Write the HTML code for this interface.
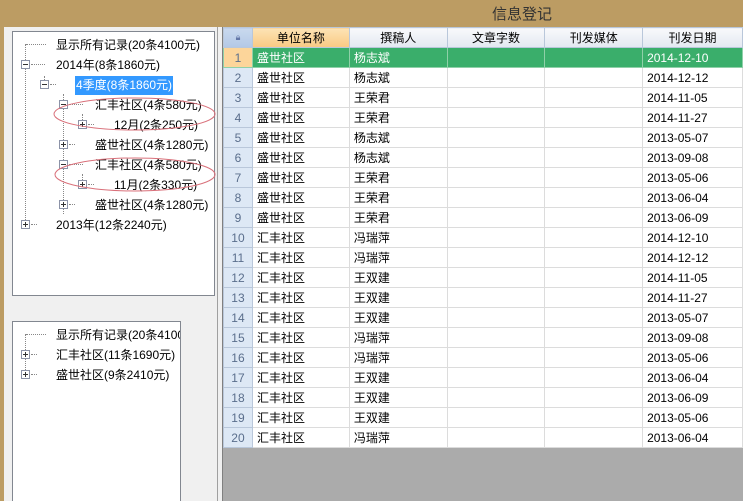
<!DOCTYPE html>
<html style="overflow:hidden"><head><meta charset="utf-8"><style>
*{margin:0;padding:0;box-sizing:border-box}
html,body{width:743px;height:501px;overflow:hidden}
body{background:#f0f0f0;font-family:"Liberation Sans","Noto Sans CJK SC",sans-serif;font-size:12px;position:relative}
.a{position:absolute}
.top{left:0;top:0;width:743px;height:27px;background:#bc9c63}
.title{top:3px;font-size:15px;color:#333;white-space:nowrap}
.strip{left:0;top:27px;width:4px;height:474px;background:#bc9c63}
.box{background:#fff;border:1px solid #828790}
.t{position:absolute;white-space:nowrap;line-height:14px;color:#000}
.pm{position:absolute;width:9px;height:9px;border:1px solid #8c93a8;background:#fff}
.pm::before{content:"";position:absolute;left:1px;top:3px;width:5px;height:1px;background:#333}
.pm.p::after{content:"";position:absolute;left:3px;top:1px;width:1px;height:5px;background:#333}
.dh{position:absolute;height:0;border-top:1px dotted #888}
.dv{position:absolute;width:0;border-left:1px dotted #888}
table{border-collapse:collapse;position:absolute;left:223px;top:27px;table-layout:fixed}
td{height:20px;border:1px solid #dcdcdc;padding:0 0 0 4px;white-space:nowrap;font-size:12px;line-height:18px;background:#fff;overflow:hidden}
td.rh{background:#dde8f5;color:#5a6e8c;text-align:center;padding:0;border-color:#b9c7da}
th{height:20px;font-weight:normal;background:linear-gradient(#f8f9fb,#e3e8f1);border:1px solid #b9c7da;font-size:12px}
tr.sel td{background:#3aae6b;color:#fff;border-color:#8fd0a8}
tr.sel td.rh{background:#fcd59a;color:#5a6e8c}
</style></head><body>
<div class="a top"></div>
<div class="a title" style="left:492px">信息登记</div>
<div class="a strip"></div>
<div class="a" style="left:217px;top:27px;width:1px;height:474px;background:#a0a0a0"></div>
<div class="a" style="left:222px;top:27px;width:1px;height:474px;background:#808080"></div>
<div class="a" style="left:223px;top:447px;width:520px;height:54px;background:#ababab;border-top:1px solid #808080"></div>

<div class="a box" style="left:12px;top:31px;width:203px;height:265px;overflow:hidden">
 <div class="dv" style="left:12px;top:12px;height:180px"></div>
 <div class="dh" style="left:13px;top:12px;width:20px"></div>
 <div class="t" style="left:43px;top:6px">显示所有记录(20条4100元)</div>
 <div class="pm" style="left:8px;top:28px"></div><div class="dh" style="left:18px;top:32px;width:14px"></div>
 <div class="t" style="left:43px;top:26px">2014年(8条1860元)</div>
 <div class="dv" style="left:31px;top:44px;height:8px"></div>
 <div class="pm" style="left:27px;top:48px"></div><div class="dh" style="left:37px;top:52px;width:6px"></div>
 <div class="t" style="left:62px;top:44px;color:#fff;background:#3399ff;padding:2px 1px 3px 1px">4季度(8条1860元)</div>
 <div class="dv" style="left:50px;top:62px;height:120px"></div>
 <div class="pm" style="left:46px;top:68px"></div><div class="dh" style="left:56px;top:72px;width:14px"></div>
 <div class="t" style="left:82px;top:66px">汇丰社区(4条580元)</div>
 <div class="dv" style="left:69px;top:82px;height:8px"></div>
 <div class="pm p" style="left:65px;top:88px"></div><div class="dh" style="left:75px;top:92px;width:6px"></div>
 <div class="t" style="left:101px;top:86px">12月(2条250元)</div>
 <div class="pm p" style="left:46px;top:108px"></div><div class="dh" style="left:56px;top:112px;width:6px"></div>
 <div class="t" style="left:82px;top:106px">盛世社区(4条1280元)</div>
 <div class="pm" style="left:46px;top:128px"></div><div class="dh" style="left:56px;top:132px;width:14px"></div>
 <div class="t" style="left:82px;top:126px">汇丰社区(4条580元)</div>
 <div class="dv" style="left:69px;top:142px;height:8px"></div>
 <div class="pm p" style="left:65px;top:148px"></div><div class="dh" style="left:75px;top:152px;width:6px"></div>
 <div class="t" style="left:101px;top:146px">11月(2条330元)</div>
 <div class="pm p" style="left:46px;top:168px"></div><div class="dh" style="left:56px;top:172px;width:6px"></div>
 <div class="t" style="left:82px;top:166px">盛世社区(4条1280元)</div>
 <div class="pm p" style="left:8px;top:188px"></div><div class="dh" style="left:18px;top:192px;width:6px"></div>
 <div class="t" style="left:43px;top:186px">2013年(12条2240元)</div>
</div>
<svg class="a" style="left:0;top:0" width="230" height="200">
 <ellipse cx="134.5" cy="114" rx="80.5" ry="16" fill="none" stroke="#d9707a" stroke-width="1"/>
 <ellipse cx="135" cy="174.5" rx="80" ry="16.5" fill="none" stroke="#d9707a" stroke-width="1"/>
</svg>

<div class="a box" style="left:12px;top:321px;width:169px;height:185px;overflow:hidden">
 <div class="dv" style="left:12px;top:12px;height:40px"></div>
 <div class="dh" style="left:13px;top:12px;width:20px"></div>
 <div class="t" style="left:43px;top:6px">显示所有记录(20条4100元)</div>
 <div class="pm p" style="left:8px;top:28px"></div><div class="dh" style="left:18px;top:32px;width:6px"></div>
 <div class="t" style="left:43px;top:26px">汇丰社区(11条1690元)</div>
 <div class="pm p" style="left:8px;top:48px"></div><div class="dh" style="left:18px;top:52px;width:6px"></div>
 <div class="t" style="left:43px;top:46px">盛世社区(9条2410元)</div>
</div>

<table>
<tr><th style="width:29px;background:linear-gradient(#c9d9ee,#b3c8e6);color:#6478a8;font-size:9px">&#x1F512;&#xFE0E;</th><th style="width:97px;background:linear-gradient(#fde3b5,#f9c983)">单位名称</th><th style="width:98px">撰稿人</th><th style="width:98px">文章字数</th><th style="width:98px">刊发媒体</th><th style="width:100px">刊发日期</th></tr>
<tr class="sel"><td class="rh">1</td><td>盛世社区</td><td>杨志斌</td><td></td><td></td><td>2014-12-10</td></tr>
<tr><td class="rh">2</td><td>盛世社区</td><td>杨志斌</td><td></td><td></td><td>2014-12-12</td></tr>
<tr><td class="rh">3</td><td>盛世社区</td><td>王荣君</td><td></td><td></td><td>2014-11-05</td></tr>
<tr><td class="rh">4</td><td>盛世社区</td><td>王荣君</td><td></td><td></td><td>2014-11-27</td></tr>
<tr><td class="rh">5</td><td>盛世社区</td><td>杨志斌</td><td></td><td></td><td>2013-05-07</td></tr>
<tr><td class="rh">6</td><td>盛世社区</td><td>杨志斌</td><td></td><td></td><td>2013-09-08</td></tr>
<tr><td class="rh">7</td><td>盛世社区</td><td>王荣君</td><td></td><td></td><td>2013-05-06</td></tr>
<tr><td class="rh">8</td><td>盛世社区</td><td>王荣君</td><td></td><td></td><td>2013-06-04</td></tr>
<tr><td class="rh">9</td><td>盛世社区</td><td>王荣君</td><td></td><td></td><td>2013-06-09</td></tr>
<tr><td class="rh">10</td><td>汇丰社区</td><td>冯瑞萍</td><td></td><td></td><td>2014-12-10</td></tr>
<tr><td class="rh">11</td><td>汇丰社区</td><td>冯瑞萍</td><td></td><td></td><td>2014-12-12</td></tr>
<tr><td class="rh">12</td><td>汇丰社区</td><td>王双建</td><td></td><td></td><td>2014-11-05</td></tr>
<tr><td class="rh">13</td><td>汇丰社区</td><td>王双建</td><td></td><td></td><td>2014-11-27</td></tr>
<tr><td class="rh">14</td><td>汇丰社区</td><td>王双建</td><td></td><td></td><td>2013-05-07</td></tr>
<tr><td class="rh">15</td><td>汇丰社区</td><td>冯瑞萍</td><td></td><td></td><td>2013-09-08</td></tr>
<tr><td class="rh">16</td><td>汇丰社区</td><td>冯瑞萍</td><td></td><td></td><td>2013-05-06</td></tr>
<tr><td class="rh">17</td><td>汇丰社区</td><td>王双建</td><td></td><td></td><td>2013-06-04</td></tr>
<tr><td class="rh">18</td><td>汇丰社区</td><td>王双建</td><td></td><td></td><td>2013-06-09</td></tr>
<tr><td class="rh">19</td><td>汇丰社区</td><td>王双建</td><td></td><td></td><td>2013-05-06</td></tr>
<tr><td class="rh">20</td><td>汇丰社区</td><td>冯瑞萍</td><td></td><td></td><td>2013-06-04</td></tr>
</table>
</body></html>
